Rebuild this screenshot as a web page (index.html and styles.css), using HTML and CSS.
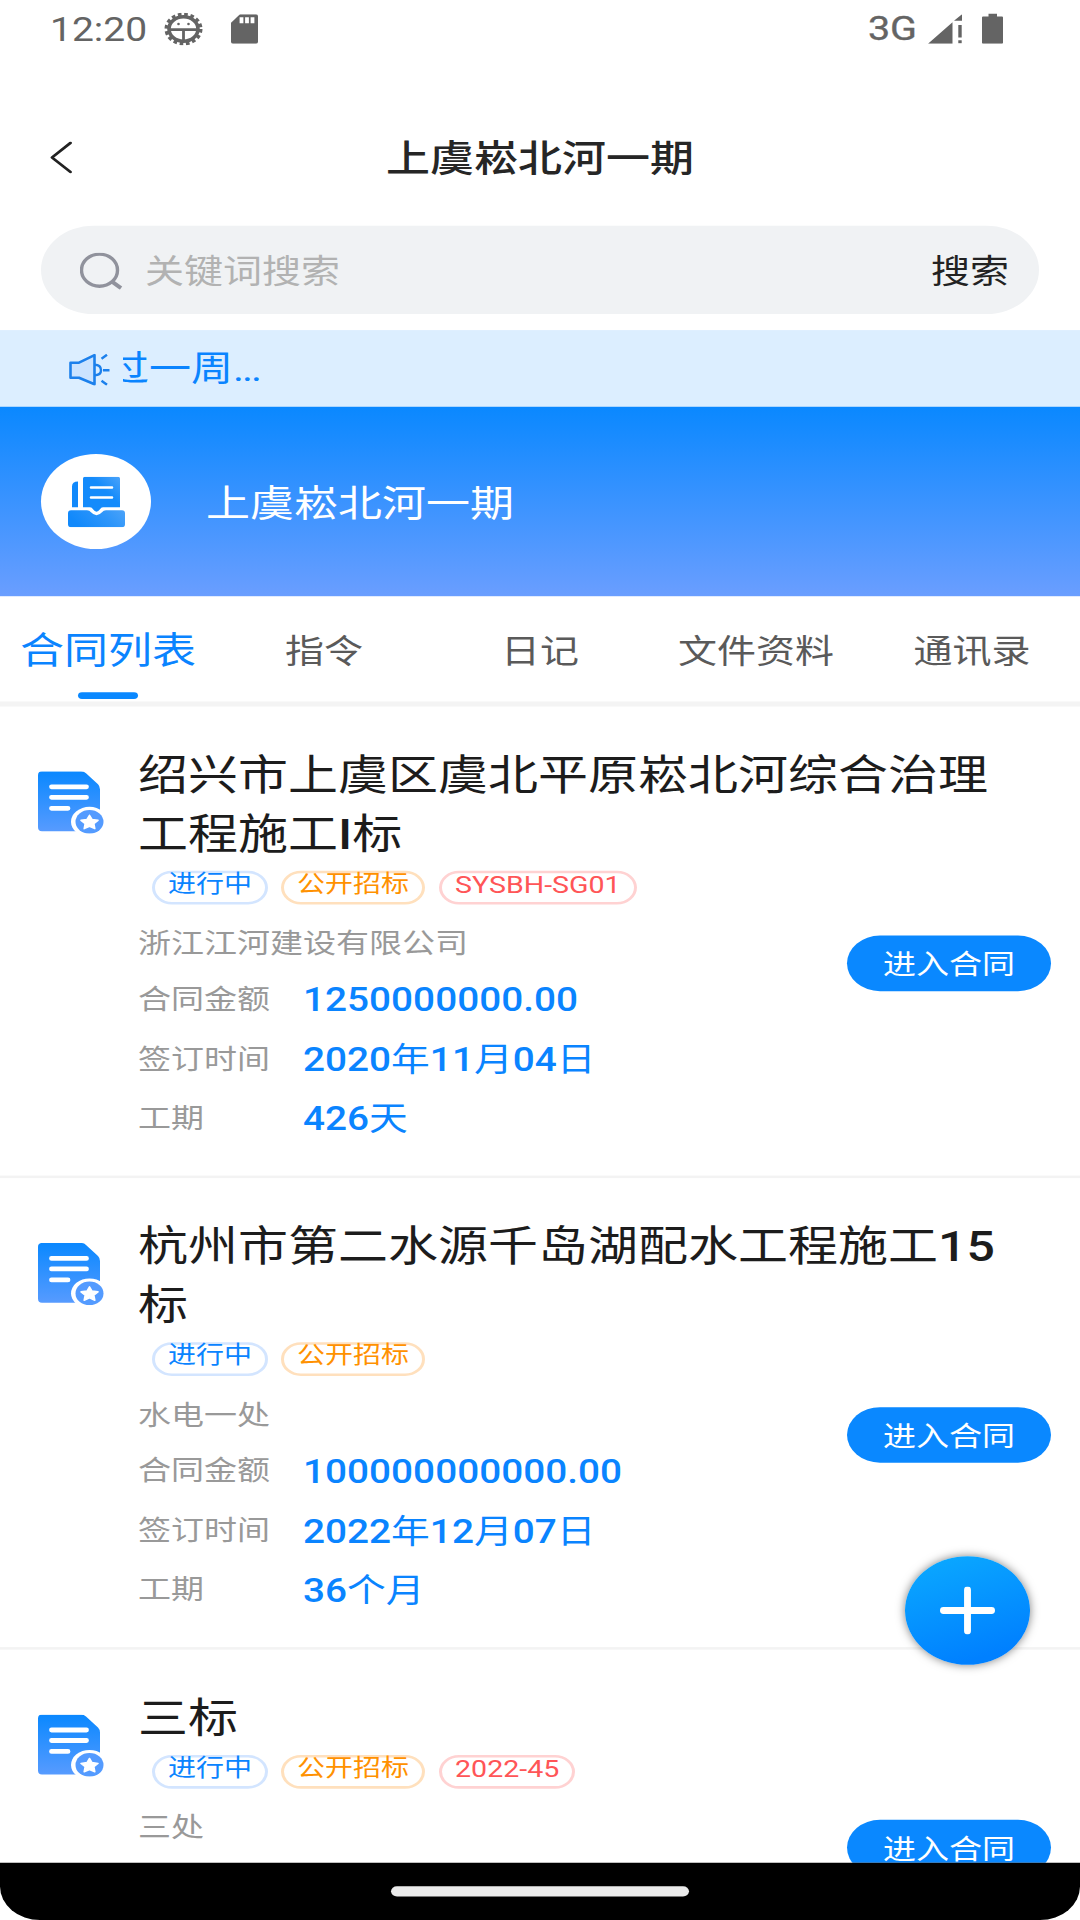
FILE: index.html
```html
<!DOCTYPE html>
<html lang="zh-CN">
<head>
<meta charset="utf-8">
<title>上虞崧北河一期</title>
<link rel="stylesheet" href="styles.css">
</head>
<body>
<svg width="0" height="0" class="defs" aria-hidden="true">
  <defs>
    <linearGradient id="docFill" x1="0" y1="0" x2="0" y2="1">
      <stop offset="0" stop-color="#0a88ff"/><stop offset="1" stop-color="#579bff"/>
    </linearGradient>
    <linearGradient id="trayFill" x1="0" y1="0.3" x2="1" y2="0">
      <stop offset="0" stop-color="#1189fb"/><stop offset="0.6" stop-color="#2f96fa"/><stop offset="1" stop-color="#4ba3f9"/>
    </linearGradient>
    <linearGradient id="pageFill" x1="0" y1="1" x2="1" y2="0">
      <stop offset="0.6" stop-color="#148bfb"/><stop offset="1" stop-color="#4ba3f9"/>
    </linearGradient>
    <symbol id="doc" viewBox="0 0 66 62.4" preserveAspectRatio="none">
      <path d="M4 0H43Q46 0 48 2L60 13Q62 15 62 18V60H4Q0 60 0 56V4Q0 0 4 0Z" fill="url(#docFill)"/>
      <path d="M13.500 15.500H48.500M13.500 26H48.500M13.500 37H30" stroke="#fff" stroke-width="4.800" stroke-linecap="round"/>
      <ellipse cx="51.500" cy="50.500" rx="18.500" ry="15" fill="#fff"/>
      <ellipse cx="51.500" cy="50.500" rx="14" ry="11.900" fill="#549bff"/>
      <path d="M51.500 44L54 48.200L60 49L55.800 52.200L56.800 57.300L51.500 55L46.200 57.300L47.200 52.200L43 49L49 48.200Z" fill="#fff" stroke="#fff" stroke-width="1.600" stroke-linejoin="round"/>
    </symbol>
  </defs>
</svg>
<div class="viewport">
<div class="screen">
  <header class="status">
    <span class="clock">12:20</span>
    <svg class="gear" viewBox="0 0 39 33" preserveAspectRatio="none">
      <ellipse cx="19.500" cy="16.500" rx="17.200" ry="14.600" fill="none" stroke="#646464" stroke-width="3.600" stroke-dasharray="3.600 2.670"/>
      <ellipse cx="19.500" cy="16.500" rx="14.500" ry="12.300" fill="none" stroke="#646464" stroke-width="3.600"/>
      <path d="M6 17H33M19.500 17V28" stroke="#646464" stroke-width="2.800"/>
      <circle cx="14.500" cy="11.500" r="1.300" fill="#646464"/><circle cx="24.500" cy="11.500" r="1.300" fill="#646464"/>
    </svg>
    <svg class="sd" viewBox="0 0 27 30" preserveAspectRatio="none">
      <path d="M9 0H25Q27 0 27 2V28Q27 30 25 30H2Q0 30 0 28V8.500Z" fill="#646464"/>
      <path d="M10.500 3V9M16 3V9M21.500 3V9" stroke="#fff" stroke-width="3.800"/>
    </svg>
    <span class="network">3G</span>
    <svg class="signal" viewBox="0 0 34 30" preserveAspectRatio="none">
      <path d="M0 30L24.500 8V30ZM26 6.500L34 0V6.500Z" fill="#646464"/>
      <path d="M32 11V23.500M32 26.500V29.500" stroke="#646464" stroke-width="3.400"/>
    </svg>
    <svg class="battery" viewBox="0 0 21 30" preserveAspectRatio="none">
      <path d="M6.500 0H15V3H20Q21 3 21 4V29Q21 30 20 30H1Q0 30 0 29V4Q0 3 1 3H6.500Z" fill="#646464"/>
    </svg>
  </header>

  <nav class="navbar">
    <svg class="back" viewBox="0 0 22 33" preserveAspectRatio="none"><path d="M20.500 1.500L2 16.500L20.500 31.500" fill="none" stroke="#222" stroke-width="2.800" stroke-linecap="round" stroke-linejoin="round"/></svg>
    <h1 class="page-title">上虞崧北河一期</h1>
  </nav>

  <div class="search">
    <svg class="search-icon" viewBox="0 0 43 37" preserveAspectRatio="none"><ellipse cx="19.500" cy="17.500" rx="18" ry="16" fill="none" stroke="#90929c" stroke-width="3.400"/><path d="M32 29L41 35.500" stroke="#90929c" stroke-width="4"/></svg>
    <span class="placeholder">关键词搜索</span>
    <span class="search-button">搜索</span>
  </div>

  <div class="notice">
    <svg class="horn" viewBox="0 0 41 32" preserveAspectRatio="none">
      <path d="M1.500 9H10L25.500 1.500V30.500L10 24H1.500Z" fill="#cbe3ff" stroke="#1c80ec" stroke-width="2.600" stroke-linejoin="round"/>
      <path d="M25.500 11Q32 11 32 16.500Q32 21.500 25.500 21.500M34 16.500H40.500M32.500 5L38 1M32.500 27L38 31" fill="none" stroke="#1c80ec" stroke-width="2.400"/>
    </svg>
    <div class="ticker"><span class="ticker-text">过一周<span class="dots">...</span></span></div>
  </div>

  <section class="banner">
    <div class="badge">
      <svg class="tray" viewBox="0 0 57 51" preserveAspectRatio="none">
        <path d="M10 5V31H4V10Q4 5 10 5Z" fill="#1189fb"/>
        <path d="M17 0H50Q52 0 52 2V31H35Q33 31 32 33Q28.500 38 25 33Q24 31 22 31H15V2Q15 0 17 0Z" fill="url(#pageFill)"/>
        <path d="M23 11H44M23 21H44" stroke="#fff" stroke-width="2.600" stroke-linecap="round"/>
        <path d="M3 34H19Q21.500 34 23 36Q28.500 42 34 36Q35.500 34 38 34H54Q57 34 57 37V48Q57 51 54 51H3Q0 51 0 48V37Q0 34 3 34Z" fill="url(#trayFill)"/>
      </svg>
    </div>
    <span class="project">上虞崧北河一期</span>
  </section>

  <div class="tabs">
    <span class="tab active">合同列表</span>
    <span class="tab">指令</span>
    <span class="tab">日记</span>
    <span class="tab">文件资料</span>
    <span class="tab">通讯录</span>
  </div>

  <main class="list">
    <article class="item">
      <svg class="doc"><use href="#doc"/></svg>
      <div class="main">
        <h2 class="title">绍兴市上虞区虞北平原崧北河综合治理工程施工<b>I</b>标</h2>
        <div class="tags"><span class="tag blue">进行中</span><span class="tag orange">公开招标</span><span class="tag red">SYSBH-SG01</span></div>
        <div class="detail">
          <div class="info">
            <p class="company">浙江江河建设有限公司</p>
            <div class="row"><span class="label">合同金额</span><span class="value"><b>1250000000.00</b></span></div>
            <div class="row"><span class="label">签订时间</span><span class="value"><b>2020</b>年<b>11</b>月<b>04</b>日</span></div>
            <div class="row"><span class="label">工期</span><span class="value"><b>426</b>天</span></div>
          </div>
          <span class="enter">进入合同</span>
        </div>
      </div>
    </article>
    <article class="item">
      <svg class="doc"><use href="#doc"/></svg>
      <div class="main">
        <h2 class="title">杭州市第二水源千岛湖配水工程施工<b>15</b>标</h2>
        <div class="tags"><span class="tag blue">进行中</span><span class="tag orange">公开招标</span></div>
        <div class="detail">
          <div class="info">
            <p class="company">水电一处</p>
            <div class="row"><span class="label">合同金额</span><span class="value"><b>100000000000.00</b></span></div>
            <div class="row"><span class="label">签订时间</span><span class="value"><b>2022</b>年<b>12</b>月<b>07</b>日</span></div>
            <div class="row"><span class="label">工期</span><span class="value"><b>36</b>个月</span></div>
          </div>
          <span class="enter">进入合同</span>
        </div>
      </div>
    </article>
    <article class="item">
      <svg class="doc"><use href="#doc"/></svg>
      <div class="main">
        <h2 class="title">三标</h2>
        <div class="tags"><span class="tag blue">进行中</span><span class="tag orange">公开招标</span><span class="tag red">2022-45</span></div>
        <div class="detail">
          <div class="info"><p class="company">三处</p></div>
          <span class="enter">进入合同</span>
        </div>
      </div>
    </article>
  </main>

  <footer class="gesture"><span class="pill"></span></footer>

  <div class="fab">
    <svg class="plus" viewBox="0 0 56 49" preserveAspectRatio="none"><path d="M3.500 24.500H52.500M28 3.500V45.500" stroke="#fff" stroke-width="7" stroke-linecap="round"/></svg>
  </div>
</div>
</div>
</body>
</html>
```
FILE: styles.css
```css
* { box-sizing: border-box; margin: 0; padding: 0; }

body {
  width: 1080px;
  height: 1920px;
  overflow: hidden;
  background: #fff;
  font-family: Roboto, "Noto Sans CJK SC", sans-serif;
}

.defs { position: absolute; }

.viewport { width: 1080px; height: 1920px; overflow: hidden; }

/* The phone screen is laid out at 1080x2280 and fitted to the window height. */
.screen {
  position: relative;
  display: flex;
  flex-direction: column;
  width: 1080px;
  height: 2280px;
  overflow: hidden;
  background: #fff;
  transform: scaleY(0.842105);
  transform-origin: 0 0;
}

svg { display: block; flex: none; }

/* Latin letters and digits are heavier than the Chinese text around them */
b { font-weight: 500; }

.status {
  display: flex;
  align-items: center;
  height: 68px;
  padding: 0 77px 0 50px;
  color: #646464;
}
.clock { width: 114px; font-size: 39px; line-height: 60px; margin-top: 3px; }
.gear { width: 39px; height: 39px; }
.sd { width: 27px; height: 35px; margin-left: 28px; }
.network { margin-left: auto; margin-right: 11px; font-size: 39.500px; -webkit-text-stroke: 0.4px #646464; line-height: 60px; }
.signal { width: 34px; height: 35px; }
.battery { width: 21px; height: 36px; margin-left: 20px; }

.navbar {
  display: grid;
  grid-template-columns: 100px 1fr 100px;
  align-items: center;
  height: 200px;
  padding-top: 38px;
}
.back { width: 22px; height: 38px; margin-left: 50px; }
.page-title { padding-top: 3px; font-size: 44px; line-height: 60px; font-weight: 500; text-align: center; color: #262626; }

.search {
  display: flex;
  align-items: center;
  flex: none;
  height: 105px;
  margin: 0 41px;
  padding: 0 30px 0 39px;
  border-radius: 53px;
  background: #f0f2f4;
  font-size: 39px;
  line-height: 56px;
}
.search-icon { width: 43px; height: 44px; margin-top: 2px; }
.placeholder { margin: 5px 0 0 22px; color: #b2b2b2; }
.search-button { margin: 5px 0 0 auto; color: #222; }

.notice {
  display: flex;
  align-items: center;
  flex: none;
  height: 91px;
  margin-top: 19px;
  padding-left: 69px;
  background: #dceeff;
}
.horn { width: 41px; height: 38px; margin-top: 3px; }
.ticker { display: flex; width: 820px; margin-left: 13px; overflow: hidden; }
.ticker-text { margin-left: -16px; font-size: 42px; line-height: 60px; color: #0a84ff; }
.dots { letter-spacing: -2.100px; }

.banner {
  display: flex;
  align-items: center;
  flex: none;
  height: 225px;
  padding-left: 41px;
  background: linear-gradient(#0a88ff, #6a9eff);
}
.badge {
  display: grid;
  place-items: center;
  width: 110px;
  height: 113px;
  border-radius: 50%;
  background: #fff;
}
.tray { width: 57px; height: 60px; }
.project { margin: 6px 0 0 55px; font-size: 44px; line-height: 60px; color: #fff; }

.tabs {
  display: grid;
  grid-template-columns: repeat(5, 216px);
  flex: none;
  height: 131px;
  border-bottom: 6px solid #f4f4f4;
}
.tab { display: flex; flex-direction: column; align-items: center; padding-top: 36px; font-size: 39px; line-height: 60px; color: #5a5a5a; }
.tab.active { padding-top: 35px; font-size: 44px; color: #0a84ff; }
.tab.active::after { content: ""; width: 60px; height: 8px; margin-top: 19px; border-radius: 4px; background: #0a88ff; }

.list { flex: 1; min-height: 0; overflow: hidden; }

.item { display: flex; padding: 47px 29px 0 38px; border-bottom: 3px solid #f3f3f3; }
.item:nth-child(-n+2) { height: 560px; }
.doc { width: 66px; height: 74px; margin-top: 30px; }
.main { flex: 1; min-width: 0; margin-left: 34px; }
.title { width: 880px; font-size: 50px; line-height: 70px; font-weight: 400; color: #1c1c1c; }
.tags { display: flex; gap: 13px; margin: 8px 0 0 14px; }
.tag { height: 40px; padding: 0 13px; border: 3px solid; border-radius: 20px; font-size: 28px; line-height: 26px; white-space: nowrap; }
.blue { color: #0a84ff; border-color: #d3e5ff; }
.orange { color: #ff9100; border-color: #ffe0bd; }
.red { margin-left: 1px; font-size: 28.600px; color: #ff5557; border-color: #ffd2d2; }

.detail { display: flex; justify-content: space-between; align-items: flex-start; }
.info { padding-top: 22px; font-size: 33px; color: #999; }
.company { line-height: 50px; margin-bottom: 6px; }
.row { display: flex; align-items: center; height: 70.600px; }
.label { width: 165px; line-height: 50px; }
.value { padding-top: 2px; font-size: 38.750px; line-height: 60px; color: #0a84ff; }
.enter { width: 204px; height: 66px; margin-top: 37px; border-radius: 33px; background: #0a88ff; color: #fff; font-size: 33px; line-height: 69px; text-align: center; }

.gesture {
  display: flex;
  justify-content: center;
  flex: none;
  height: 68px;
  padding-top: 28px;
  border-radius: 0 0 40px 40px;
  background: #000;
}
.pill { width: 298px; height: 12px; border-radius: 6px; background: #ebebeb; }

/* Floating add button over the list */
.fab {
  position: absolute;
  left: 905px;
  top: 1848px;
  display: grid;
  place-items: center;
  width: 125px;
  height: 129px;
  border-radius: 50%;
  background: linear-gradient(160deg, #0aa6ff 10%, #0080ff 85%);
  box-shadow: 0 0 10px rgba(0, 0, 0, 0.5);
}
.plus { width: 55px; height: 57px; }
```
